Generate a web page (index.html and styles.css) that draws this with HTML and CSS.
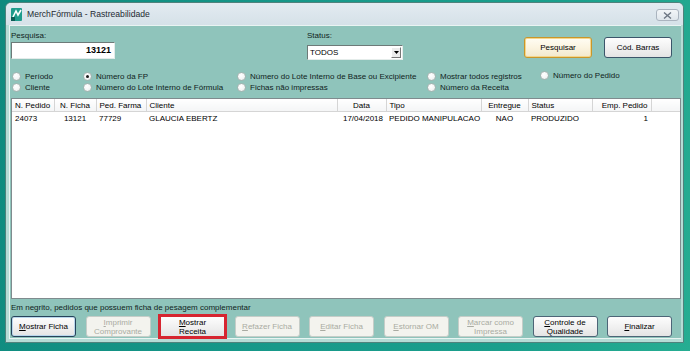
FILE: index.html
```html
<!DOCTYPE html>
<html lang="pt">
<head>
<meta charset="utf-8">
<title>MerchFórmula - Rastreabilidade</title>
<link rel="stylesheet" href="styles.css">
</head>
<body>
<div class="window">
  <div class="titlebar">
    <svg class="app-icon" width="11" height="13" viewBox="0 0 11 13">
      <rect x="0" y="0" width="11" height="13" rx="1" fill="#1f9c8c"/>
      <path d="M1 11 L5 3 L7 7 L10 2" stroke="#ffffff" stroke-width="1.6" fill="none"/>
      <rect x="0" y="9" width="4" height="4" fill="#0d5d56"/>
    </svg>
    <span class="title">MerchFórmula - Rastreabilidade</span>
    <span class="close">
      <svg width="9" height="7" viewBox="0 0 9 7"><path d="M1 0.5 L8 6.5 M8 0.5 L1 6.5" stroke="#6d7784" stroke-width="1.4"/></svg>
    </span>
  </div>
  <div class="client">
    <div class="top">
      <div class="field search">
        <div class="label">Pesquisa:</div>
        <div class="input">13121</div>
      </div>
      <div class="field status">
        <div class="label">Status:</div>
        <div class="select"><span>TODOS</span><span class="arrow"><svg width="5" height="3" viewBox="0 0 5 3"><path d="M0 0 H5 L2.5 3 Z" fill="#000"/></svg></span></div>
      </div>
      <div class="top-buttons">
        <div class="btn default">Pesquisar</div>
        <div class="btn">Cód. Barras</div>
      </div>
    </div>
    <div class="radios">
      <div class="radio"><span class="dot"></span>Período</div>
      <div class="radio"><span class="dot on"></span>Número da FP</div>
      <div class="radio"><span class="dot"></span>Número do Lote Interno de Base ou Excipiente</div>
      <div class="radio"><span class="dot"></span>Mostrar todos registros</div>
      <div class="radio up"><span class="dot"></span>Número do Pedido</div>
      <div class="radio"><span class="dot"></span>Cliente</div>
      <div class="radio"><span class="dot"></span>Número do Lote Interno de Fórmula</div>
      <div class="radio"><span class="dot"></span>Fichas não impressas</div>
      <div class="radio"><span class="dot"></span>Número da Receita</div>
    </div>
    <div class="listview">
      <table class="grid">
        <colgroup>
          <col class="c1"><col class="c2"><col class="c3"><col class="c4"><col class="c5"><col class="c6"><col class="c7"><col class="c8"><col class="c9"><col>
        </colgroup>
        <thead>
          <tr>
            <th class="l">N. Pedido</th>
            <th>N. Ficha</th>
            <th class="l">Ped. Farma</th>
            <th class="l">Cliente</th>
            <th>Data</th>
            <th class="l">Tipo</th>
            <th>Entregue</th>
            <th class="l">Status</th>
            <th class="r">Emp. Pedido</th>
            <th class="last"></th>
          </tr>
        </thead>
        <tbody>
          <tr>
            <td>24073</td>
            <td class="c">13121</td>
            <td>77729</td>
            <td>GLAUCIA EBERTZ</td>
            <td class="r">17/04/2018</td>
            <td>PEDIDO MANIPULACAO</td>
            <td class="c">NAO</td>
            <td>PRODUZIDO</td>
            <td class="r">1</td>
            <td></td>
          </tr>
        </tbody>
      </table>
    </div>
    <div class="note">Em negrito, pedidos que possuem ficha de pesagem complementar</div>
    <div class="actions">
      <div class="btn act focus"><span><u>M</u>ostrar Ficha</span></div>
      <div class="btn act disabled"><span><u>I</u>mprimir<br>Comprovante</span></div>
      <div class="btn act marked"><span><u>M</u>ostrar<br>Receita</span></div>
      <div class="btn act disabled"><span><u>R</u>efazer Ficha</span></div>
      <div class="btn act disabled"><span><u>E</u>ditar Ficha</span></div>
      <div class="btn act disabled"><span><u>E</u>stornar OM</span></div>
      <div class="btn act disabled"><span><u>M</u>arcar como<br>Impressa</span></div>
      <div class="btn act"><span><u>C</u>ontrole de<br>Qualidade</span></div>
      <div class="btn act"><span><u>F</u>inalizar</span></div>
    </div>
  </div>
</div>
</body>
</html>
```

FILE: styles.css
```css
html, body {
  margin: 0;
  padding: 0;
}

body {
  width: 690px;
  height: 351px;
  overflow: hidden;
  background: linear-gradient(100deg, #0f8a7e 0%, #17998a 45%, #1a9f8c 75%, #26ad92 100%);
  font-family: "Liberation Sans", Arial, sans-serif;
  font-size: 8px;
  color: #000;
}

.window {
  margin: 2px 0 0 5px;
  width: 679px;
  height: 341px;
  box-sizing: border-box;
  border: 1px solid #4f827c;
  border-radius: 6px 6px 0 0;
  background: #b6dcd6;
  padding: 0 2px 3px 3px;
  display: flex;
  flex-direction: column;
}

.titlebar {
  height: 22px;
  display: flex;
  align-items: center;
  background: linear-gradient(#e3ebf1, #d5e1e8);
  margin: 0 -2px 0 -3px;
  padding: 0 2px 0 4px;
  border-radius: 5px 5px 0 0;
}

.app-icon {
  margin-left: 1px;
  flex: none;
}

.title {
  margin-left: 5px;
  font-family: "Liberation Sans", Arial, sans-serif;
  font-size: 8.6px;
  color: #1d2a33;
  flex: 1;
}

.close {
  width: 23px;
  height: 12px;
  box-sizing: border-box;
  border: 1px solid #aab4bf;
  border-radius: 3px;
  background: linear-gradient(#f2f5f8, #dfe6ec);
  display: flex;
  align-items: center;
  justify-content: center;
  margin-right: 2px;
  margin-top: 2px;
}

.client {
  flex: 1;
  background: #8fc4bb;
  border-top: 1px solid #e9f4f2;
  border-left: 1px solid #e9f4f2;
  border-bottom: 1px solid #e9f4f2;
  padding: 4px 0 0 1px;
  display: flex;
  flex-direction: column;
}

.top {
  display: flex;
  align-items: flex-start;
  height: 30px;
}

.label {
  height: 11px;
  line-height: 11px;
  color: #0f1e1c;
}

.search {
  width: 104px;
}

.input {
  margin-top: 1px;
  height: 17px;
  box-sizing: border-box;
  background: #fff;
  border: 1px solid;
  border-color: #6d7a78 #e4ecea #e4ecea #6d7a78;
  text-align: right;
  font-weight: bold;
  font-size: 9px;
  line-height: 15px;
  padding-right: 3px;
}

.status {
  margin-left: 192px;
  width: 96px;
}

.select {
  margin-top: 4px;
  height: 15px;
  box-sizing: border-box;
  background: #fff;
  border: 1px solid;
  border-color: #6d7a78 #e4ecea #e4ecea #6d7a78;
  display: flex;
  align-items: center;
  padding-left: 2px;
}

.select span:first-child {
  flex: 1;
}

.arrow {
  width: 10px;
  height: 11px;
  margin-right: 1px;
  background: #ececec;
  border: 1px solid;
  border-color: #fff #777 #777 #fff;
  box-sizing: border-box;
  display: flex;
  align-items: center;
  justify-content: center;
}

.top-buttons {
  display: flex;
  gap: 12px;
  margin-left: 121px;
  margin-top: 7px;
}

.btn {
  width: 68px;
  height: 21px;
  box-sizing: border-box;
  border: 1px solid #3b556a;
  border-radius: 3px;
  background: linear-gradient(#fdfdfd 0%, #f1f1f1 50%, #e4e4e4 100%);
  display: flex;
  align-items: center;
  justify-content: center;
  text-align: center;
  line-height: 9px;
  color: #000;
}

.btn.default {
  border-color: #c9962a;
  box-shadow: inset 0 0 0 1px #f5d68a;
  background: linear-gradient(#fffdf4 0%, #fbf4e0 50%, #f2e8cc 100%);
}

.radios {
  margin-top: 11px;
  margin-left: 1px;
  display: grid;
  grid-template-columns: 71px 154px 190px 113px auto;
  grid-auto-rows: 11px;
}

.radio {
  display: flex;
  align-items: center;
  white-space: nowrap;
  color: #0f1e1c;
}

.radio.up {
  position: relative;
  top: -1px;
}

.dot {
  width: 9px;
  height: 9px;
  box-sizing: border-box;
  border-radius: 50%;
  border: 1px solid #a5b4b1;
  background: radial-gradient(circle at 40% 35%, #ffffff 0%, #f4f6f6 55%, #d8dfde 100%);
  margin-right: 4px;
  flex: none;
  display: flex;
  align-items: center;
  justify-content: center;
}

.dot.on::after {
  content: "";
  width: 3px;
  height: 3px;
  border-radius: 50%;
  background: #1a1a1a;
}

.listview {
  margin-top: 5px;
  height: 201px;
  box-sizing: border-box;
  background: #fff;
  border: 1px solid #7f8b8e;
  overflow: hidden;
}

.grid {
  border-collapse: collapse;
  table-layout: fixed;
  width: 100%;
}

.grid .c1 { width: 42px; }
.grid .c2 { width: 42px; }
.grid .c3 { width: 50px; }
.grid .c4 { width: 191px; }
.grid .c5 { width: 49px; }
.grid .c6 { width: 95px; }
.grid .c7 { width: 47px; }
.grid .c8 { width: 64px; }
.grid .c9 { width: 59px; }

.grid th {
  height: 12px;
  padding: 0 3px;
  font-weight: normal;
  text-align: center;
  white-space: nowrap;
  background: linear-gradient(#ffffff, #f4f5f6);
  border-right: 1px solid #d5d5d5;
  border-bottom: 1px solid #d5d5d5;
  line-height: 11px;
}

.grid th.l { text-align: left; }
.grid th.r { text-align: right; }
.grid th.last { border-right: 0; }

.grid td {
  height: 13px;
  padding: 0 3px;
  white-space: nowrap;
  overflow: hidden;
  line-height: 13px;
}

.grid td.c { text-align: center; }
.grid td.r { text-align: right; }

.note {
  margin-top: 4px;
  height: 10px;
  line-height: 10px;
  color: #0f1e1c;
}

.actions {
  margin-top: 3px;
  display: flex;
  gap: 9.5px;
}

.btn.act {
  width: 65px;
  height: 21px;
  border-color: #4d6577;
}

.btn.act.focus {
  border-color: #26425a;
  box-shadow: inset 0 0 0 1px #b9d7ec;
}

.btn.act.disabled {
  border-color: #c5cdc8;
  background: #f3f3ee;
  color: #a9aba2;
}

.btn.act.marked {
  outline: 2px solid #d62530;
  border-color: #d62530;
  border-radius: 0;
}

.btn u {
  text-decoration: underline;
  text-underline-offset: 1px;
}
```
